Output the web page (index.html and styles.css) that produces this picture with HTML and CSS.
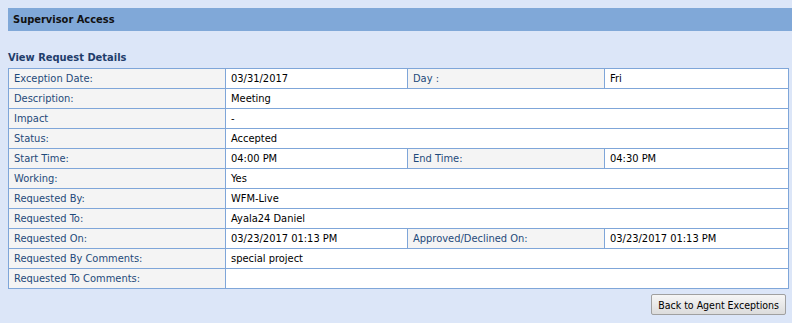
FILE: index.html
```html
<!DOCTYPE html>
<html>
<head>
<meta charset="utf-8">
<link rel="stylesheet" href="styles.css">
</head>
<body>
<div class="bar">Supervisor Access</div>
<h2 class="title">View Request Details</h2>
<table class="details">
<colgroup><col class="c1"><col class="c2"><col class="c3"><col class="c4"></colgroup>
<tr><td class="lbl">Exception Date:</td><td>03/31/2017</td><td class="lbl">Day :</td><td>Fri</td></tr>
<tr><td class="lbl">Description:</td><td colspan="3">Meeting</td></tr>
<tr><td class="lbl">Impact</td><td colspan="3">-</td></tr>
<tr><td class="lbl">Status:</td><td colspan="3">Accepted</td></tr>
<tr><td class="lbl">Start Time:</td><td>04:00 PM</td><td class="lbl">End Time:</td><td>04:30 PM</td></tr>
<tr><td class="lbl">Working:</td><td colspan="3">Yes</td></tr>
<tr><td class="lbl">Requested By:</td><td colspan="3">WFM-Live</td></tr>
<tr><td class="lbl">Requested To:</td><td colspan="3">Ayala24 Daniel</td></tr>
<tr><td class="lbl">Requested On:</td><td>03/23/2017 01:13 PM</td><td class="lbl">Approved/Declined On:</td><td>03/23/2017 01:13 PM</td></tr>
<tr><td class="lbl">Requested By Comments:</td><td colspan="3">special project</td></tr>
<tr><td class="lbl">Requested To Comments:</td><td colspan="3"></td></tr>
</table>
<div class="actions"><button class="btn">Back to Agent Exceptions</button></div>
</body>
</html>
```
FILE: styles.css
```css
html, body {
  margin: 0;
  padding: 0;
  background: #dce6f8;
}
body {
  padding: 8px 0 0 8px;
  font-family: "DejaVu Sans", sans-serif;
  font-stretch: condensed;
  font-size: 11px;
  color: #000;
}
.bar {
  background: #80a8d8;
  height: 23px;
  line-height: 23px;
  padding-left: 5px;
  font-weight: bold;
  color: #111;
}
.title {
  margin: 20px 0 0 0;
  font-size: 11px;
  font-weight: bold;
  color: #1f3d6b;
  height: 17px;
  line-height: 14px;
}
.details {
  border-collapse: collapse;
  width: 780px;
  table-layout: fixed;
  background: #fff;
}
.c1 { width: 217px; }
.c2 { width: 182px; }
.c3 { width: 197px; }
.c4 { width: 184px; }
.details tr {
  height: 20px;
}
.details td {
  border: 1px solid #7fa6d9;
  padding: 0 5px;
  line-height: 18px;
  white-space: nowrap;
}
.details td.lbl {
  background: #f4f4f4;
  color: #1f4a7a;
}
.actions {
  display: flex;
  justify-content: flex-end;
  padding: 5px 6px 0 0;
}
.btn {
  font-family: "DejaVu Sans", sans-serif;
  font-stretch: condensed;
  font-size: 10.5px;
  color: #000;
  height: 21px;
  padding: 0 6px;
  border: 1px solid #a0a0a0;
  border-radius: 2px;
  background: linear-gradient(#f6f6f6, #dcdcdc);
}
```
